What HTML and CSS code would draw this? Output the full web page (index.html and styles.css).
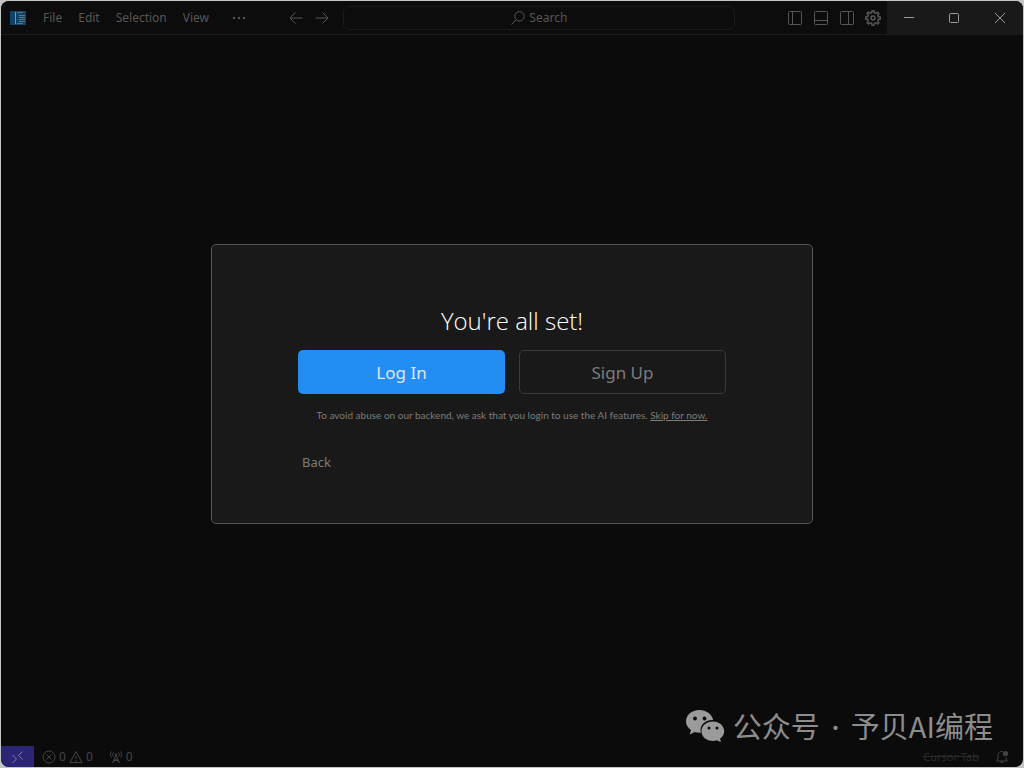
FILE: index.html
```
<!DOCTYPE html>
<html lang="en">
<head>
    <meta charset="UTF-8">
    <meta name="viewport" content="width=device-width, initial-scale=1.0">
    <title>Cursor</title>
    <link rel="stylesheet" href="styles.css">
</head>
<body>
    <div class="window">

        <!-- Title Bar -->
        <header class="titlebar">
            <div class="titlebar-left">
                <svg class="app-icon" viewBox="0 0 16 14" aria-hidden="true">
                    <rect width="16" height="14" fill="#0e4468"/>
                    <path d="M5.500 1v12" stroke="#7f929e"/>
                    <path d="M7 1.500h6M9 4.500h6M9 6.500h6M9 8.500h6M9 10.500h6M7 12.500h6" stroke="#5d7789"/>
                </svg>
                <nav class="menu">
                    <button type="button">File</button>
                    <button type="button">Edit</button>
                    <button type="button">Selection</button>
                    <button type="button">View</button>
                    <button type="button" class="more" aria-label="More">
                        <svg width="14" height="4" viewBox="0 0 14 4"><circle cx="2" cy="2" r="1.200"/><circle cx="7" cy="2" r="1.200"/><circle cx="12" cy="2" r="1.200"/></svg>
                    </button>
                </nav>
                <div class="history">
                    <button type="button" aria-label="Go Back">
                        <svg width="14" height="14" viewBox="0 0 14 14"><path d="M13.500 7H1M6.500 1.500L1 7l5.500 5.500"/></svg>
                    </button>
                    <button type="button" aria-label="Go Forward">
                        <svg width="14" height="14" viewBox="0 0 14 14"><path d="M.5 7H13M7.500 1.500L13 7l-5.500 5.500"/></svg>
                    </button>
                </div>
            </div>

            <button type="button" class="search">
                <svg width="14" height="14" viewBox="0 0 14 14"><circle cx="8.500" cy="5.300" r="4.700"/><path d="M5.200 8.700L.5 13.500"/></svg>
                Search
            </button>

            <div class="titlebar-right">
                <div class="layout-actions">
                    <button type="button" aria-label="Toggle Primary Side Bar">
                        <svg width="16" height="16" viewBox="0 0 16 16"><rect x="1.500" y="1.500" width="13" height="13" rx="1"/><path d="M5.500 1.500v13"/></svg>
                    </button>
                    <button type="button" aria-label="Toggle Panel">
                        <svg width="16" height="16" viewBox="0 0 16 16"><rect x="1.500" y="1.500" width="13" height="13" rx="1"/><path d="M1.500 10.500h13"/></svg>
                    </button>
                    <button type="button" aria-label="Toggle Secondary Side Bar">
                        <svg width="16" height="16" viewBox="0 0 16 16"><rect x="1.500" y="1.500" width="13" height="13" rx="1"/><path d="M9.500 1.500v13"/></svg>
                    </button>
                    <button type="button" aria-label="Settings">
                        <svg class="gear" width="16" height="16" viewBox="0 0 16 16"><path d="M6.700 2.800L7 .7h2l.3 2.100 1.500.6 1.700-1.200 1.400 1.400-1.200 1.700.6 1.500 2.100.3v2l-2.100.3-.6 1.500 1.200 1.700-1.400 1.400-1.700-1.200-1.500.6L9 15.500H7l-.3-2.100-1.500-.6-1.700 1.200-1.400-1.400 1.200-1.700-.6-1.500L.6 9V7l2.100-.2.6-1.600-1.200-1.700 1.400-1.400 1.700 1.200z"/><circle cx="8" cy="8" r="1.900"/></svg>
                    </button>
                </div>
                <div class="window-controls">
                    <button type="button" aria-label="Minimize">
                        <svg width="10" height="10" viewBox="0 0 10 10"><path d="M0 4.500h10"/></svg>
                    </button>
                    <button type="button" aria-label="Maximize">
                        <svg width="10" height="10" viewBox="0 0 10 10"><rect x=".5" y=".5" width="9" height="9" rx="1"/></svg>
                    </button>
                    <button type="button" aria-label="Close">
                        <svg width="10" height="10" viewBox="0 0 10 10"><path d="M0 0l10 10M10 0L0 10"/></svg>
                    </button>
                </div>
            </div>
        </header>

        <!-- Editor area, empty -->
        <main class="workspace"></main>

        <!-- Status Bar -->
        <footer class="statusbar">
            <button type="button" class="remote" aria-label="Remote">
                <svg width="14" height="14" viewBox="0 0 14 14"><path d="M1.500 5l4 4-4 4M11.500 1.500l-4 4 4 4"/></svg>
            </button>
            <button type="button" class="problems">
                <svg width="14" height="14" viewBox="0 0 14 14"><circle cx="7" cy="7" r="6"/><path d="M4.500 4.500l5 5M9.500 4.500l-5 5"/></svg>
                <span>0</span>
                <svg width="14" height="14" viewBox="0 0 14 14"><path d="M7 1.500l6 11H1zM7 5.500v3.500M7 10v1.500"/></svg>
                <span>0</span>
            </button>
            <button type="button" class="ports">
                <svg width="14" height="14" viewBox="0 0 14 14"><path d="M3.500 13L7 5l3.500 8M4.500 10.500h5M5.500 8.500l4 3.500M8.500 8.500l-4 3.500M2.500 1.500c-1.500 2-1.500 4 0 6M4.500 2.500c-1 1.300-1 2.700 0 4M11.500 1.500c1.500 2 1.500 4 0 6M9.500 2.500c1 1.300 1 2.700 0 4"/><circle cx="7" cy="4.500" r=".8"/></svg>
                <span>0</span>
            </button>
            <button type="button" class="cursor-tab">Cursor Tab</button>
            <button type="button" class="bell" aria-label="Notifications">
                <svg width="14" height="14" viewBox="0 0 14 14"><path d="M8 1.700C5 .8 3 2.800 3 5.500v3L1.700 11h10.600L11 8.500V7M5.500 11.500c.3 1.500 2.700 1.500 3 0"/><circle class="dot" cx="10.500" cy="3.500" r="2.600"/></svg>
            </button>
        </footer>

        <!-- Sign-in Dialog -->
        <div class="overlay">
            <section class="dialog" role="dialog" aria-labelledby="dialogTitle">
                <h1 id="dialogTitle">You're all set!</h1>
                <div class="actions">
                    <button type="button" class="btn btn-login">Log In</button>
                    <button type="button" class="btn btn-signup">Sign Up</button>
                </div>
                <p class="note">To avoid abuse on our backend, we ask that you login to use the AI features. <a href="#">Skip for now.</a></p>
                <button type="button" class="back">Back</button>
            </section>
        </div>

        <!-- Channel name -->
        <div class="channel" lang="zh-CN">
            <svg width="40" height="32" viewBox="0 0 40 32" aria-hidden="true">
                <path fill="#9b9b9b" d="M14.500 0C6.500 0 1 5 1 11.300c0 3.700 1.900 6.700 5 8.800l-1.300 4.500 5-2.600c1.600.4 3 .7 4.800.7h1.400C14 15.600 19.800 10 27.200 10h1C27 4.200 21.200 0 14.500 0z"/>
                <path fill="#9b9b9b" d="M28 11.500c-6.600 0-11.500 4.300-11.500 9.700S21.400 31 28 31c1.400 0 2.800-.3 4-.7l4 2-1-3.500c2.500-1.900 4.200-4.500 4.200-7.600 0-5.400-5-9.700-11.200-9.700z"/>
                <g fill="#0c0c0c"><circle cx="10" cy="8.500" r="1.900"/><circle cx="19.500" cy="8.500" r="1.900"/><circle cx="24" cy="18" r="1.500"/><circle cx="32" cy="18" r="1.500"/></g>
            </svg>
            <div>公众号<span class="separator"> · </span>予贝AI编程</div>
        </div>
    </div>
</body>
</html>
```
FILE: styles.css
```
/* General Styling */
* {
    box-sizing: border-box;
}

body {
    margin: 0;
    background: #c4c6c6;
    font-family: "Noto Sans", "Open Sans", sans-serif;
    font-size: 12px;
    color: #565656;
}

button {
    margin: 0;
    padding: 0;
    border: none;
    background: none;
    font: inherit;
    color: inherit;
    cursor: pointer;
}

svg {
    display: block;
    flex-shrink: 0;
    fill: none;
    stroke: currentColor;
}

.window {
    position: relative;
    display: flex;
    flex-direction: column;
    height: calc(100vh - 2px);
    margin: 1px;
    border-radius: 8px;
    background: #0b0b0b;
    overflow: hidden;
}

/* Title Bar */
.titlebar {
    display: grid;
    grid-template-columns: 6fr 392px 5fr;
    align-items: center;
    gap: 14px;
    height: 34px;
    background: #0c0c0c;
    border-bottom: 1px solid #1a1a1a;
}

.titlebar-left,
.titlebar-right,
.menu,
.history,
.layout-actions,
.window-controls {
    display: flex;
    align-items: center;
}

.titlebar-left {
    padding-left: 9px;
}

.app-icon {
    width: 16px;
    height: 14px;
    stroke: none;
}

.menu {
    margin-left: 9px;
}

.menu button {
    padding: 0 8px;
}

.menu .more {
    padding: 0 15px;
}

.more svg {
    fill: currentColor;
    stroke: none;
}

.history {
    gap: 12px;
    margin-left: auto;
}

.search {
    display: flex;
    align-items: center;
    justify-content: center;
    gap: 4px;
    height: 24px;
    border: 1px solid #1a1a1a;
    border-radius: 6px;
}

.titlebar-right {
    justify-content: flex-end;
    align-self: stretch;
}

.layout-actions {
    gap: 10px;
    margin-right: 6px;
}

.gear {
    stroke-width: 1.5;
}

.window-controls {
    align-self: stretch;
    background: #191919;
    color: #9a9a9a;
}

.window-controls button {
    display: flex;
    align-items: center;
    justify-content: center;
    align-self: stretch;
    width: 46px;
}

.window-controls button:first-child {
    width: 44px;
}

.workspace {
    flex: 1;
}

/* Status Bar */
.statusbar {
    display: flex;
    align-items: stretch;
    height: 21px;
    color: #444;
}

.statusbar button {
    display: flex;
    align-items: center;
    gap: 3px;
}

.statusbar .remote {
    justify-content: center;
    width: 33px;
    background: #2c2575;
    color: #8480a8;
}

.problems {
    margin-left: 8px;
}

.ports {
    margin-left: 16px;
}

.statusbar .cursor-tab {
    margin-left: auto;
    font-size: 11px;
    color: #2a2a2a;
    text-decoration: line-through;
}

.bell {
    margin: 0 14px 0 16px;
}

.bell .dot {
    fill: currentColor;
    stroke: none;
}

/* Sign-in Dialog */
.overlay {
    position: absolute;
    inset: 0;
    display: flex;
    align-items: center;
    justify-content: center;
}

.dialog {
    width: 602px;
    max-width: 90%;
    padding: 58px 86px 52px;
    background: #191919;
    border: 1px solid #555;
    border-radius: 5px;
    color: #7c7c7c;
}

h1 {
    margin: 0 0 11px;
    font-family: "Open Sans", sans-serif;
    font-size: 24px;
    font-weight: 300;
    line-height: 36px;
    text-align: center;
    color: #fff;
}

.actions {
    display: grid;
    grid-template-columns: 1fr 1fr;
    gap: 14px;
}

.btn {
    height: 44px;
    border-radius: 5px;
    font-size: 17px;
}

.btn-login {
    background: #228df2;
    color: #e4e4e4;
}

.btn-signup {
    border: 1px solid #3a3a3a;
}

.note {
    margin: 13px 0 30px;
    font-family: Lato, sans-serif;
    font-size: 10px;
    line-height: 16px;
    text-align: center;
    white-space: nowrap;
}

.note a {
    color: inherit;
}

.back {
    padding: 0 4px;
    font-size: 13px;
    line-height: 18px;
}

/* Channel name */
.channel {
    position: absolute;
    right: 30px;
    bottom: 18px;
    display: flex;
    align-items: center;
    gap: 8px;
    color: #8d8d8d;
    font-family: "Noto Sans CJK SC", sans-serif;
    font-size: 29px;
    line-height: 44px;
}

.channel svg {
    stroke: none;
}

.separator {
    padding: 0 4px;
    font-family: "Open Sans", sans-serif;
    font-weight: 600;
}
```
